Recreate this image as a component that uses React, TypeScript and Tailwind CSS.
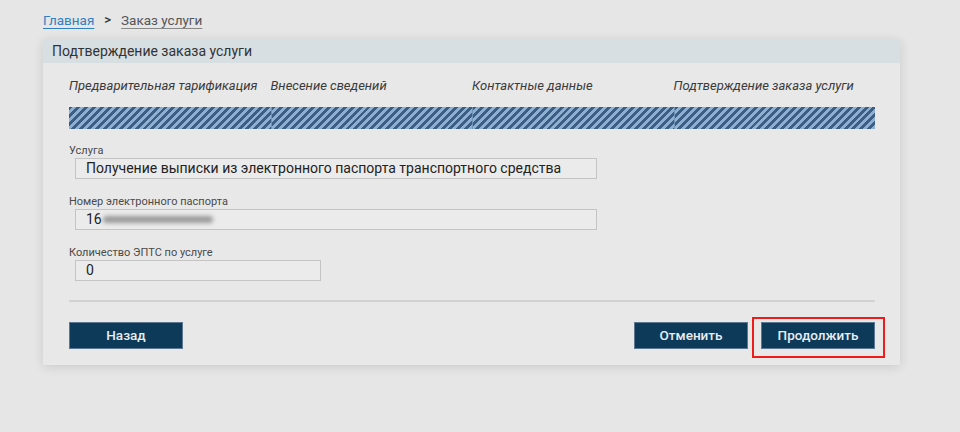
import { useState } from 'react';

const steps = ['Предварительная тарификация', 'Внесение сведений', 'Контактные данные', 'Подтверждение заказа услуги'];

function Field({ label, value, width, blurred }: any) {
  return (
    <div className="flex flex-col">
      <span className="text-[11px] leading-[14px] text-[#4a4a4a]">{label}</span>
      <div className={`ml-[6px] h-[21px] border border-[#c4c4c4] bg-[#ebebeb] flex items-center px-[10px] text-[14px] text-[#222] ${width}`}>
        {blurred ? (
          <>
            <span>16</span>
            <span className="ml-[1px] h-[7px] w-[110px] rounded-full bg-[#9a9a9a] blur-[2px]" />
          </>
        ) : (
          <span>{value}</span>
        )}
      </div>
    </div>
  );
}

export default function App() {
  const [active] = useState(3);
  return (
    <div className="w-[960px] h-[432px] bg-[#e6e6e6] font-['Roboto',sans-serif] overflow-hidden">
      <div className="pl-[43px] pt-[10px] h-[39px] flex items-start gap-[10px] text-[13.5px]">
        <a className="text-[#2f7fc1] underline underline-offset-[3px] decoration-[#2f7fc1]">Главная</a>
        <span className="text-[#333] text-[13px] font-medium">&gt;</span>
        <a className="text-[#555] underline underline-offset-[3px] decoration-[#888]">Заказ услуги</a>
      </div>

      <div className="ml-[43px] w-[857px] bg-[#e8e8e8] shadow-[0_2px_10px_rgba(0,0,0,0.12)] pb-[7px]">
        <div className="h-[24px] bg-[#d7dfe3] pl-[9px] pt-[1px] flex items-center text-[14px] text-[#333]">
          Подтверждение заказа услуги
        </div>

        <div className="px-[26px]">
          <div className="grid grid-cols-4 w-[806px] mt-[15px] text-[13px] leading-[16px] italic text-[#3a3a3a]">
            {steps.map((s) => (
              <span key={s} className="whitespace-nowrap">{s}</span>
            ))}
          </div>

          <div className="grid grid-cols-4 w-[806px] h-[22px] mt-[13px]">
            {steps.map((s, i) => (
              <div
                key={s}
                className={`h-full bg-[repeating-linear-gradient(135deg,#3b5f84_0px,#3b5f84_2.8px,#8eafcf_2.8px,#8eafcf_5.6px)] ${i > 0 ? 'border-l border-[#6f93b5]' : ''} ${i > active ? 'opacity-40' : ''}`}
              />
            ))}
          </div>

          <div className="mt-[15px] flex flex-col gap-[16px]">
            <Field label="Услуга" value="Получение выписки из электронного паспорта транспортного средства" width="w-[522px]" />
            <Field label="Номер электронного паспорта" blurred width="w-[522px]" />
            <Field label="Количество ЭПТС по услуге" value="0" width="w-[246px]" />
          </div>

          <div className="mt-[19px] h-[2px] w-[806px] bg-[#d2d2d2]" />

          <div className="mt-[15px] flex items-start justify-between w-[806px]">
            <button className="mt-[5px] w-[114px] h-[27px] bg-[#0e3a5a] border border-[#5d7790] text-[#e6edf3] text-[13.5px] font-medium">
              Назад
            </button>
            <div className="flex items-start gap-[4px] -mr-[10px]">
              <button className="mt-[5px] w-[114px] h-[27px] bg-[#0e3a5a] border border-[#5d7790] text-[#e6edf3] text-[13.5px] font-medium">
                Отменить
              </button>
              <div className="border-2 border-[#ee1c1c] pt-[3px] pb-[7px] pr-[8px] pl-[7px]">
                <button className="w-[114px] h-[27px] bg-[#0e3a5a] border border-[#5d7790] text-[#e6edf3] text-[13.5px] font-medium block">
                  Продолжить
                </button>
              </div>
            </div>
          </div>
        </div>
      </div>
    </div>
  );
}
